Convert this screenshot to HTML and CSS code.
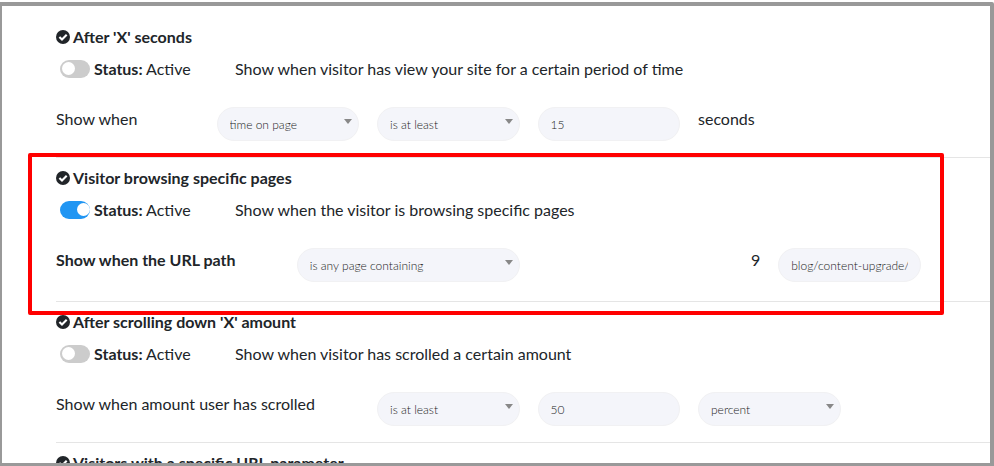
FILE: index.html
```
<!DOCTYPE html>
<html lang="en">
  <head>
    <meta charset="UTF-8" />
    <meta name="viewport" content="width=device-width, initial-scale=1.0" />
    <title>Display Rules</title>
    <link rel="stylesheet" href="styles.css">
  </head>
  <body>
    <svg class="sprite" aria-hidden="true">
      <symbol id="check-circle" viewBox="0 0 14 14">
        <circle cx="7" cy="7" r="7" fill="currentColor" />
        <path d="M3.4 6.9l2.6 2.6 4.7-4.7" fill="none" stroke="#fff" stroke-width="2.1" />
      </symbol>
    </svg>

    <main class="panel">
      <section class="rule">
        <h2 class="rule-title"><svg class="icon" aria-hidden="true"><use href="#check-circle" /></svg>After 'X' seconds</h2>
        <div class="status-row">
          <label class="status">
            <input type="checkbox" class="toggle" />
            <span><strong>Status:</strong> Active</span>
          </label>
          <p>Show when visitor has view your site for a certain period of time</p>
        </div>
        <div class="rule-row">
          <label class="col-2" for="time-type">Show when</label>
          <select id="time-type" class="field col-2"><option>time on page</option></select>
          <select class="field col-2" aria-label="Time comparison"><option>is at least</option></select>
          <input id="seconds" type="text" class="field col-2" value="15" />
          <label class="col-2" for="seconds">seconds</label>
        </div>
      </section>

      <section class="rule highlighted">
        <h2 class="rule-title"><svg class="icon" aria-hidden="true"><use href="#check-circle" /></svg>Visitor browsing specific pages</h2>
        <div class="status-row">
          <label class="status">
            <input type="checkbox" class="toggle" checked />
            <span><strong>Status:</strong> Active</span>
          </label>
          <p>Show when the visitor is browsing specific pages</p>
        </div>
        <div class="rule-row">
          <label class="col-3 bold" for="url-match">Show when the URL path</label>
          <select id="url-match" class="field col-3"><option>is any page containing</option></select>
          <label class="col-3 align-right" for="url-path">9</label>
          <input id="url-path" type="text" class="field col-2" value="blog/content-upgrade/" />
        </div>
      </section>

      <section class="rule">
        <h2 class="rule-title"><svg class="icon" aria-hidden="true"><use href="#check-circle" /></svg>After scrolling down 'X' amount</h2>
        <div class="status-row">
          <label class="status">
            <input type="checkbox" class="toggle" />
            <span><strong>Status:</strong> Active</span>
          </label>
          <p>Show when visitor has scrolled a certain amount</p>
        </div>
        <div class="rule-row">
          <label class="col-4" for="scroll-match">Show when amount user has scrolled</label>
          <select id="scroll-match" class="field col-2"><option>is at least</option></select>
          <input type="text" class="field col-2" value="50" aria-label="Scroll amount" />
          <select class="field col-2" aria-label="Scroll unit"><option>percent</option></select>
        </div>
      </section>

      <section class="rule">
        <h2 class="rule-title"><svg class="icon" aria-hidden="true"><use href="#check-circle" /></svg>Visitors with a specific URL parameter</h2>
      </section>
    </main>
  </body>
</html>
```
FILE: styles.css
```
* {
  box-sizing: border-box;
}
body {
  margin: 0;
  padding-top: 2px;
  height: 100vh;
  overflow: hidden;
  font-family: Lato, sans-serif;
  font-size: 16px;
  line-height: 24px;
  color: #212529;
  background: #fff;
}
.sprite {
  display: none;
}
.panel {
  height: 100%;
  overflow: hidden;
  padding: 11px 0 0 54px;
  border: solid #999;
  border-width: 4px 4px 3px 2px;
  border-radius: 0 2px 0 0;
}
/* the 12 columns run slightly past the panel's right edge */
.rule {
  position: relative;
  margin-right: -11px;
  padding: 8px 0 16px;
  border-bottom: 1px solid #e5e5e5;
}
.rule-title {
  display: flex;
  align-items: center;
  gap: 3px;
  margin: 0 0 8px;
  font-size: 16px;
  font-weight: 700;
  line-height: 24px;
}
.icon {
  width: 14px;
  height: 14px;
}
.status-row {
  display: flex;
  margin-bottom: 26px;
}
.status-row p {
  margin: 0;
}
.status {
  display: flex;
  align-items: center;
  gap: 4px;
  width: 179px;
  padding-left: 4px;
}
.toggle {
  appearance: none;
  width: 30px;
  height: 18px;
  margin: 0;
  padding: 2px;
  border-radius: 9px;
  background: #ccc;
}
.toggle::before {
  content: "";
  display: block;
  width: 13px;
  height: 13px;
  border-radius: 50%;
  background: #fff;
}
.toggle:checked {
  background: #2196f3;
}
.toggle:checked::before {
  margin-left: auto;
  margin-right: -2px;
}
.rule-row {
  display: grid;
  grid-template-columns: repeat(12, 1fr);
  column-gap: 18px;
  align-items: start;
}
.col-2 {
  grid-column: span 2;
}
.col-3 {
  grid-column: span 3;
}
.col-4 {
  grid-column: span 4;
}
.bold {
  font-weight: 700;
}
.align-right {
  text-align: right;
}
.field {
  appearance: none;
  width: 100%;
  min-width: 0;
  height: 34px;
  padding: 0 12px;
  border: 1px solid #f1f1f3;
  border-radius: 17px;
  font-family: inherit;
  font-size: 12px;
  font-weight: 300;
  color: #222;
  background: #f4f5fa;
}
select.field {
  background-image: url("data:image/svg+xml,%3Csvg xmlns='http://www.w3.org/2000/svg' viewBox='0 0 8 5'%3E%3Cpath fill='%23888' d='M0 0h8L4 5z'/%3E%3C/svg%3E");
  background-repeat: no-repeat;
  background-position: right 6px top 11px;
  background-size: 8px 5px;
}
/* red frame around the rule being explained */
.highlighted {
  padding-bottom: 19px;
}
.highlighted::after {
  content: "";
  position: absolute;
  inset: -5px 57px -14px -28px;
  border: 4px solid #f00;
  border-radius: 2px;
  pointer-events: none;
}
```
